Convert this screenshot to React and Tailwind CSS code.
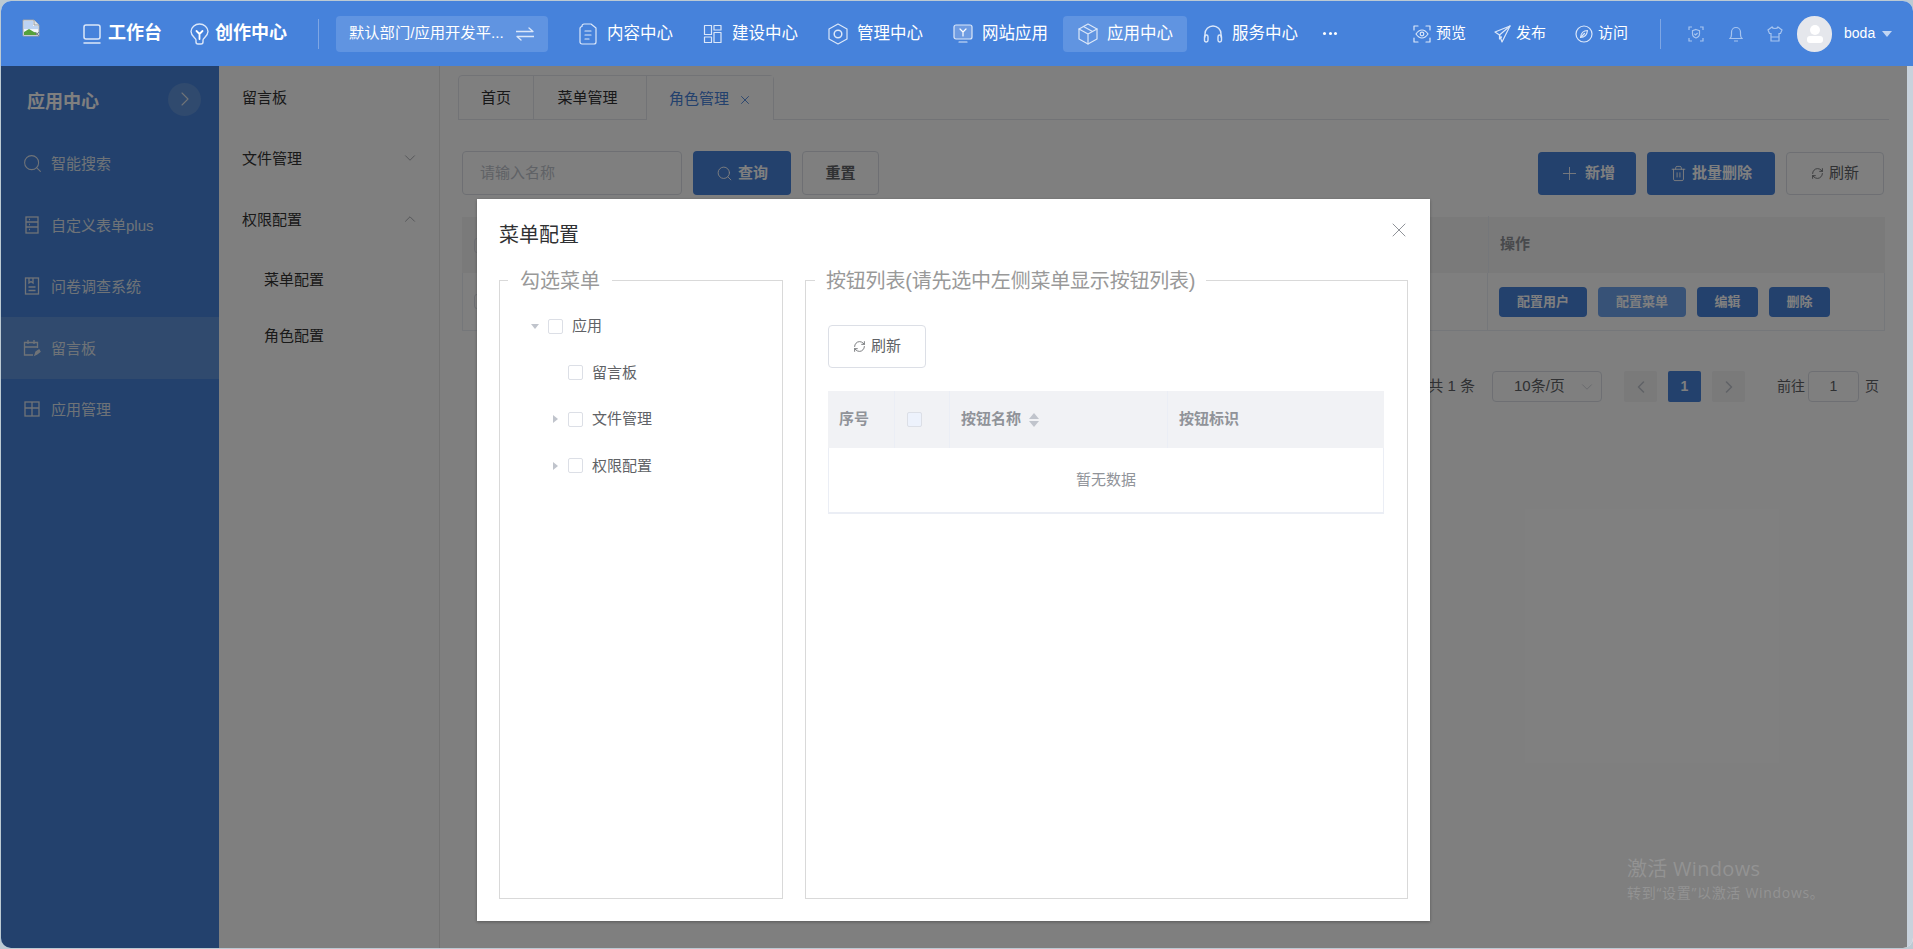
import React from 'react';
import { Search, Plus, Trash2, X, ChevronDown, ChevronUp, ChevronRight, ChevronLeft, RefreshCw } from 'lucide-react';

const ic = { fill: 'none', stroke: '#dbe7f9', strokeWidth: 1.2, strokeLinecap: 'round', strokeLinejoin: 'round' };

// icones du header, dessinees a la main
const BrokenImage = () => (
  <svg width="18" height="18" viewBox="0 0 18 18">
    <path d="M1 1h11l5 5v11H1z" fill="#f2f5fa" stroke="#9aa0a6" />
    <path d="M12 1v5h5" fill="#dfe3e8" stroke="#9aa0a6" />
    <path d="M2 2h9v5h5v3H2z" fill="#bcd3f3" />
    <path d="M2 16v-3l5-3 5 3 4 1v2z" fill="#55a13c" />
    <path d="M13 13l4 4M17 13l-3 3" stroke="#7d8590" />
  </svg>
);
const Laptop = () => (
  <svg width="18" height="22" viewBox="0 0 18 22" {...ic} strokeWidth="1.5">
    <rect x="1" y="2" width="16" height="14" rx="2" />
    <path d="M1 20h16" />
  </svg>
);
const Bulb = () => (
  <svg width="19" height="22" viewBox="0 0 19 22" {...ic} strokeWidth="1.4">
    <path d="M6 17c0-2-5-4-5-8.500C1 4.500 5 1 9.500 1S18 4.500 18 8.500C18 13 13 15 13 17v2a2 2 0 0 1-2 2H8a2 2 0 0 1-2-2z" />
    <path d="M6.500 8l3 3 3-3M9.500 11v5" stroke="#fff" strokeWidth="1.800" />
  </svg>
);
const Doc = () => (
  <svg width="20" height="22" viewBox="0 0 20 22" {...ic}>
    <path d="M4 3.500V3a2 2 0 0 1 2-2h7l5 4v14a2 2 0 0 1-2 2H4a2 2 0 0 1-2-2V5.500a2 2 0 0 1 2-2z" />
    <path d="M7 8h6M7 12h6M7 16h4" />
  </svg>
);
const Blocks = () => (
  <svg width="20" height="20" viewBox="0 0 20 20" {...ic}>
    <rect x="1.500" y="1.500" width="7" height="9" />
    <rect x="1.500" y="13" width="7" height="5.500" />
    <rect x="11" y="1.500" width="7" height="4.500" />
    <rect x="11" y="8.500" width="7" height="10" />
  </svg>
);
const Hex = () => (
  <svg width="20" height="22" viewBox="0 0 20 22" {...ic}>
    <path d="M10 1l9 5v10l-9 5-9-5V6z" />
    <circle cx="10" cy="11" r="3.800" strokeWidth="1.500" />
  </svg>
);
const Monitor = () => (
  <svg width="20" height="20" viewBox="0 0 20 20" {...ic}>
    <rect x="1" y="1" width="18" height="14" rx="2" fill="#6f9ce2" />
    <path d="M7 5l3 3 3-3M10 8v4" stroke="#fff" />
    <path d="M6 18h8" />
  </svg>
);
const Cube = () => (
  <svg width="20" height="22" viewBox="0 0 20 22" {...ic}>
    <path d="M10 1l9 5v10l-9 5-9-5V6z" />
    <path d="M1 6l9 5 9-5M10 11v10M5.500 3.500l9 5" />
  </svg>
);
const Headset = () => (
  <svg width="20" height="20" viewBox="0 0 20 20" {...ic} strokeWidth="1.4">
    <path d="M2 13v-3a8 8 0 0 1 16 0v3" />
    <rect x="1.500" y="11" width="3.500" height="7" rx="1.700" />
    <rect x="15" y="11" width="3.500" height="7" rx="1.700" />
  </svg>
);
const Swap = () => (
  <svg width="18" height="14" viewBox="0 0 18 14" {...ic} strokeWidth="1.300">
    <path d="M0 4.500h17L13 1M18 9.500H1L5 13" />
  </svg>
);
const Preview = () => (
  <svg width="18" height="18" viewBox="0 0 18 18" {...ic}>
    <path d="M1 5V1h4M13 1h4v4M17 13v4h-4M5 17H1v-4" />
    <path d="M3 9c2-3 4-4 6-4s4 1 6 4c-2 3-4 4-6 4s-4-1-6-4z" />
    <circle cx="9" cy="9" r="1.800" />
  </svg>
);
const Send = () => (
  <svg width="17" height="18" viewBox="0 0 17 18" {...ic}>
    <path d="M16 1L1 7l4.500 3L8 17z" />
    <path d="M16 1L5.500 10v4l2-2" />
  </svg>
);
const Compass = () => (
  <svg width="18" height="18" viewBox="0 0 18 18" {...ic}>
    <circle cx="9" cy="9" r="8" />
    <path d="M12.500 5.500C9 5.500 6 8 5.500 12.500 9 12.500 12 10 12.500 5.500zM6 12l3.500-3.500" />
  </svg>
);
const ShieldScan = () => (
  <svg width="16" height="16" viewBox="0 0 16 16" fill="none" stroke="#a6c4ef" strokeWidth="1.200">
    <path d="M1 4V1h3M12 1h3v3M15 12v3h-3M4 15H1v-3" />
    <path d="M8 3.500l3.500 1.200V8c0 2-2 3.500-3.500 4-1.500-.5-3.500-2-3.500-4V4.700zM6.300 7.800L7.600 9l2-2" />
  </svg>
);
const Bell = () => (
  <svg width="14" height="16" viewBox="0 0 14 16" fill="none" stroke="#a6c4ef" strokeWidth="1.200">
    <path d="M1 12.500c1-1 1.500-2 1.500-4V6a4.500 4.500 0 0 1 9 0v2.500c0 2 .5 3 1.500 4zM5 15h4" />
  </svg>
);
const Shirt = () => (
  <svg width="16" height="16" viewBox="0 0 16 16" fill="none" stroke="#a6c4ef" strokeWidth="1.200">
    <path d="M5 1L1 4l1.500 3.500H4V15h8V7.500h1.500L15 4l-4-3c-.5 2-5.500 2-6 0zM4 11h8" />
  </svg>
);

// icones du menu lateral
const sideIc = { fill: 'none', stroke: '#dfe6ef', strokeWidth: 1.3 };
const FormIcon = () => (
  <svg width="16" height="18" viewBox="0 0 16 18" {...sideIc}>
    <rect x="2" y="1" width="12" height="16" />
    <path d="M2 6h12M2 11h12M5 3.500h1M5 8.500h1M5 13.500h1" />
  </svg>
);
const SurveyIcon = () => (
  <svg width="16" height="18" viewBox="0 0 16 18" {...sideIc}>
    <rect x="1.500" y="1" width="13" height="16" />
    <path d="M5 1v5l2-1.500L9 6V1M4.500 10h7M4.500 13.500h7" />
  </svg>
);
const BoardIcon = () => (
  <svg width="18" height="18" viewBox="0 0 18 18" {...sideIc}>
    <path d="M10 16H1.500V3.500h13V9M1.500 8h13M5 1v4M11 1v4" />
    <path d="M12 16l1-3 3-2 1 1.500-3 2.500z" fill="#dfe6ef" />
  </svg>
);
const GridIcon = () => (
  <svg width="16" height="16" viewBox="0 0 16 16" {...sideIc}>
    <rect x="1" y="1" width="14" height="14" />
    <path d="M1 7h14M8 1v14" />
  </svg>
);

const sideItems = [
  { label: '智能搜索', icon: <Search size={21} strokeWidth={1.2} color="#dfe6ef" /> },
  { label: '自定义表单plus', icon: <FormIcon /> },
  { label: '问卷调查系统', icon: <SurveyIcon /> },
  { label: '留言板', icon: <BoardIcon />, active: true },
  { label: '应用管理', icon: <GridIcon /> },
];

const navItems = [
  { label: '内容中心', icon: <Doc /> },
  { label: '建设中心', icon: <Blocks /> },
  { label: '管理中心', icon: <Hex /> },
  { label: '网站应用', icon: <Monitor /> },
  { label: '应用中心', icon: <Cube />, active: true },
  { label: '服务中心', icon: <Headset /> },
];

const TopAction = ({ icon, label, className }) => (
  <div className={`flex items-center gap-[5px] text-[15px] text-white ${className}`}>
    {icon}
    <span>{label}</span>
  </div>
);

const Header = () => (
  <header className="h-[65px] shrink-0 bg-[#4682db] flex items-center pl-[21px] relative z-20">
    <div className="-mt-[11px]"><BrokenImage /></div>
    <div className="flex items-center gap-[7px] ml-[43px] text-[18px] font-bold text-white">
      <Laptop />
      <span>工作台</span>
    </div>
    <div className="flex items-center gap-[6px] ml-[28px] text-[18px] font-bold text-white">
      <Bulb />
      <span>创作中心</span>
    </div>
    <div className="w-px h-[30px] bg-[#7ea6e4] ml-[31px]"></div>
    <div className="w-[212px] h-[36px] ml-[17px] rounded-[4px] bg-[#6094e1] flex items-center pl-[13px] text-[15.300px] text-white">
      <span className="w-[167px] whitespace-nowrap">默认部门/应用开发平...</span>
      <Swap />
    </div>
    <div className="flex gap-px ml-[15px]">
      {navItems.map(item => (
        <div
          key={item.label}
          className={`w-[124px] h-[36px] pl-[15px] rounded-[4px] flex items-center gap-[9px] text-[16.500px] text-white ${item.active ? 'bg-[#6094e1]' : ''}`}
        >
          {item.icon}
          <span>{item.label}</span>
        </div>
      ))}
    </div>
    <div className="flex gap-[2.500px] ml-[11px] w-[15px]">
      <span className="w-[3px] h-[3px] rounded-full bg-white"></span>
      <span className="w-[3px] h-[3px] rounded-full bg-white"></span>
      <span className="w-[3px] h-[3px] rounded-full bg-white"></span>
    </div>
    <TopAction icon={<Preview />} label="预览" className="ml-[75px]" />
    <TopAction icon={<Send />} label="发布" className="ml-[28px]" />
    <TopAction icon={<Compass />} label="访问" className="ml-[29px]" />
    <div className="w-px h-[30px] bg-[#7ea6e4] ml-[32px]"></div>
    <div className="ml-[27px]"><ShieldScan /></div>
    <div className="ml-[25px]"><Bell /></div>
    <div className="ml-[24px]"><Shirt /></div>
    <div className="w-[35px] h-[36px] ml-[14px] rounded-full bg-[#e5e7ec] flex flex-col items-center justify-center">
      <span className="w-[10px] h-[10px] rounded-full bg-white"></span>
      <span className="w-[16px] h-[7px] mt-[1px] rounded-[3px] bg-white"></span>
    </div>
    <span className="ml-[12px] text-[14px] text-white">boda</span>
    <span className="ml-[7px] w-0 h-0 border-x-[5.500px] border-x-transparent border-t-[6px] border-t-[#c2d6f3]"></span>
  </header>
);

const Sidebar = () => (
  <aside className="w-[218px] shrink-0 bg-[#4682db]">
    <div className="h-[66.500px] pl-[26px] pr-[18px] flex items-center justify-between">
      <span className="text-[18px] font-bold text-white mt-[6px]">应用中心</span>
      <span className="w-[33px] h-[33px] rounded-full bg-[#6094dc] flex items-center justify-center">
        <ChevronRight size={24} strokeWidth={1.100} color="#dfe6ef" />
      </span>
    </div>
    {sideItems.map(item => (
      <div key={item.label} className={`h-[61.500px] flex items-center text-[15px] text-[#dfe6ef] ${item.active ? 'bg-[#6094dc]' : ''}`}>
        <span className="w-[50px] flex justify-center pl-[12px]">{item.icon}</span>
        <span className="mt-[2px]">{item.label}</span>
      </div>
    ))}
  </aside>
);

const SubRow = ({ label, open }) => (
  <div className="h-[61px] pl-[23px] pr-[20px] flex items-center justify-between text-[15px] text-[#333]">
    <span>{label}</span>
    {open === true && <ChevronUp size={18} strokeWidth={1} color="#909399" className="-mt-[4px]" />}
    {open === false && <ChevronDown size={18} strokeWidth={1} color="#909399" className="-mt-[4px]" />}
  </div>
);

const SubMenu = () => (
  <aside className="w-[221px] shrink-0 bg-white border-r border-[#e6e6e6] pt-[2px]">
    <SubRow label="留言板" />
    <SubRow label="文件管理" open={false} />
    <SubRow label="权限配置" open={true} />
    <div className="h-[55px] pl-[45px] flex items-center text-[15px] text-[#333] mt-[2px]">菜单配置</div>
    <div className="h-[55px] pl-[45px] flex items-center text-[15px] text-[#333] mt-[1px]">角色配置</div>
  </aside>
);

const PageBtn = ({ primary, className, children }) => (
  <div className={`h-[43px] rounded-[4px] flex items-center justify-center gap-[5px] text-[15px] ${primary ? 'bg-[#4682db] text-white font-bold' : 'border border-[#dcdfe6] text-[#606266]'} ${className}`}>
    {children}
  </div>
);

const RowBtn = ({ light, className, children }) => (
  <div className={`h-[30px] rounded-[4px] flex items-center justify-center text-[13px] font-bold text-white ${light ? 'bg-[#6ea4ee]' : 'bg-[#4682db]'} ${className}`}>
    {children}
  </div>
);

const Page = () => (
  <main className="flex-1 min-w-0 bg-white pl-[18px] pt-[9px]">
    {/* onglets */}
    <div className="h-[45px] mr-[18px] border-b border-[#e4e7ed] flex">
      <div className="h-[45px] flex border border-[#e4e7ed] rounded-t-[4px] text-[15px] text-[#303133]">
        <div className="w-[74px] flex items-center justify-center pt-[2px]">首页</div>
        <div className="w-[113px] flex items-center justify-center border-l border-[#e4e7ed] pt-[2px] pr-[5px]">菜单管理</div>
        <div className="w-[127px] h-[44px] pl-[22px] pt-[2px] flex items-center border-l border-[#e4e7ed] bg-white text-[#4682db]">
          <span>角色管理</span>
          <X size={14} strokeWidth={1.500} className="ml-[9px] mt-[2px]" />
        </div>
      </div>
    </div>
    {/* filtres */}
    <div className="mt-[31px] ml-[4px] mr-[23px] flex items-center">
      <div className="w-[220px] h-[44px] border border-[#dcdfe6] rounded-[4px] pl-[17px] flex items-center text-[15px] text-[#c0c4cc]">请输入名称</div>
      <PageBtn primary className="w-[98px] h-[44px] ml-[11px]"><Search size={17} strokeWidth={1.300} />查询</PageBtn>
      <PageBtn className="w-[77px] h-[44px] ml-[11px] font-bold">重置</PageBtn>
      <div className="flex-1"></div>
      <PageBtn primary className="w-[98px]"><Plus size={21} strokeWidth={1} />新增</PageBtn>
      <PageBtn primary className="w-[128px] ml-[11px]"><Trash2 size={17} strokeWidth={1.300} />批量删除</PageBtn>
      <PageBtn className="w-[98px] ml-[11px]"><RefreshCw size={13} strokeWidth={1.500} />刷新</PageBtn>
    </div>
    {/* tableau */}
    <div className="mt-[22px] ml-[4px] mr-[22px] text-[15px]">
      <div className="h-[56px] bg-[#f5f5f5] flex font-bold text-[#909399]">
        <div className="flex-1 pl-[12px] flex items-center">
          <span className="w-[15px] h-[15px] rounded-[3px] border border-[#dcdfe6]"></span>
        </div>
        <div className="w-[397px] pl-[11px] flex items-center border-l border-[#ebeef5] -mt-px">操作</div>
      </div>
      <div className="h-[58px] flex border-b border-x border-[#ebeef5]">
        <div className="flex-1 pl-[11px] flex items-center">
          <span className="w-[15px] h-[15px] rounded-[3px] border border-[#dcdfe6]"></span>
        </div>
        <div className="w-[397px] pl-[11px] flex items-center gap-[11px] border-l border-[#ebeef5]">
          <RowBtn className="w-[88px]">配置用户</RowBtn>
          <RowBtn light className="w-[88px]">配置菜单</RowBtn>
          <RowBtn className="w-[61px]">编辑</RowBtn>
          <RowBtn className="w-[61px]">删除</RowBtn>
        </div>
      </div>
    </div>
    {/* pagination */}
    <div className="mt-[40px] mr-[28px] h-[31px] flex justify-end items-center text-[14px] text-[#606266]">
      <span className="text-[15px]">共 1 条</span>
      <div className="w-[110px] h-[31px] ml-[17px] border border-[#dcdfe6] rounded-[4px] flex items-center justify-between pl-[21px] pr-[5px] text-[15px]">
        <span>10条/页</span>
        <ChevronDown size={18} strokeWidth={1} color="#c0c4cc" />
      </div>
      <div className="w-[33px] h-[31px] ml-[22px] rounded-[2px] bg-[#f4f4f5] flex items-center justify-center">
        <ChevronLeft size={20} strokeWidth={1.800} color="#c0c4cc" />
      </div>
      <div className="w-[33px] h-[31px] ml-[11px] rounded-[2px] bg-[#4682db] text-white font-bold flex items-center justify-center">1</div>
      <div className="w-[33px] h-[31px] ml-[11px] rounded-[2px] bg-[#f4f4f5] flex items-center justify-center">
        <ChevronRight size={20} strokeWidth={1.800} color="#c0c4cc" />
      </div>
      <span className="ml-[32px]">前往</span>
      <div className="w-[51px] h-[31px] ml-[3px] border border-[#dcdfe6] rounded-[4px] flex items-center justify-center">1</div>
      <span className="ml-[6px]">页</span>
    </div>
  </main>
);

const Box = ({ className }) => (
  <span className={`block w-[15px] h-[15px] rounded-[2px] border border-[#dcdfe6] bg-white ${className || ''}`}></span>
);

const treeRows = [
  { label: '应用', depth: 0, arrow: 'down' },
  { label: '留言板', depth: 1 },
  { label: '文件管理', depth: 1, arrow: 'right' },
  { label: '权限配置', depth: 1, arrow: 'right' },
];

const TreeRow = ({ row }) => (
  <div className={`h-[46.500px] flex items-center text-[15px] text-[#606266] ${row.depth === 1 ? 'pl-[48px]' : 'pl-[28px]'}`}>
    <span className="w-[14px] mr-[6px] flex justify-center">
      {row.arrow === 'down' && <span className="w-0 h-0 border-x-[4px] border-x-transparent border-t-[5px] border-t-[#c0c4cc]"></span>}
      {row.arrow === 'right' && <span className="w-0 h-0 border-y-[4px] border-y-transparent border-l-[5px] border-l-[#c0c4cc]"></span>}
    </span>
    <Box />
    <span className="ml-[9px]">{row.label}</span>
  </div>
);

const MenuConfigDialog = () => (
  <div className="w-[953px] h-[722px] mt-[133px] mr-px bg-white shadow-[0_1px_3px_rgba(0,0,0,0.3)] relative">
    <div className="h-[66px] pl-[22px] pt-[23px] text-[20px] leading-[26px] text-[#303133]">菜单配置</div>
    <X size={24} strokeWidth={1} color="#909399" className="absolute top-[19px] right-[19px]" />
    <div className="flex gap-[22px] pl-[22px]">
      <fieldset className="w-[284px] h-[634px] border border-[#d9d9d9]">
        <legend className="ml-[8px] px-[12px] pt-[2px] text-[20px] leading-[28px] text-[#999]">勾选菜单</legend>
        <div className="pt-[8px]">
          {treeRows.map(row => <TreeRow key={row.label} row={row} />)}
        </div>
      </fieldset>
      <fieldset className="w-[603px] h-[634px] border border-[#d9d9d9]">
        <legend className="ml-[9px] px-[11px] pt-[2px] text-[20px] leading-[28px] text-[#999] tracking-[-0.2px]">按钮列表(请先选中左侧菜单显示按钮列表)</legend>
        <div className="pl-[22px] pt-[30px]">
          <div className="w-[98px] h-[43px] border border-[#dcdfe6] rounded-[4px] flex items-center justify-center gap-[5px] text-[15px] text-[#606266]">
            <RefreshCw size={13} strokeWidth={1.500} />
            刷新
          </div>
          <div className="w-[556px] mt-[23px] text-[15px]">
            <div className="h-[57px] bg-[#f1f2f5] flex font-bold text-[#909399]">
              <div className="w-[67px] pl-[11px] flex items-center border-r border-[#ebeef5]">序号</div>
              <div className="w-[55px] pl-[12px] flex items-center border-r border-[#ebeef5]">
                <span className="block w-[15px] h-[15px] rounded-[2px] border border-[#dcdfe6] bg-[#edf2fc]"></span>
              </div>
              <div className="w-[218px] pl-[11px] flex items-center gap-[8px] border-r border-[#ebeef5]">
                <span>按钮名称</span>
                <span className="flex flex-col gap-[2px]">
                  <span className="w-0 h-0 border-x-[5px] border-x-transparent border-b-[6px] border-b-[#c0c4cc]"></span>
                  <span className="w-0 h-0 border-x-[5px] border-x-transparent border-t-[6px] border-t-[#c0c4cc]"></span>
                </span>
              </div>
              <div className="flex-1 pl-[11px] flex items-center">按钮标识</div>
            </div>
            <div className="h-[66px] border-x border-b-2 border-[#ebeef5] flex items-center justify-center text-[#909399]">暂无数据</div>
          </div>
        </div>
      </fieldset>
    </div>
  </div>
);

export default function App() {
  return (
    <div className="w-[1913px] h-[949px] bg-[#bccad3] pt-px pl-px pb-px overflow-hidden font-['Liberation_Sans','Noto_Sans_CJK_SC',sans-serif]">
      <div className="h-full bg-white rounded-[10px] overflow-hidden flex flex-col">
        <Header />
        <div className="flex-1 min-h-0 flex">
          <div className="flex-1 min-w-0 flex relative">
            <Sidebar />
            <SubMenu />
            <Page />
            {/* masque + dialogue */}
            <div className="absolute inset-0 bg-black/50 flex justify-center z-10">
              <MenuConfigDialog />
              <div className="absolute left-[1626px] top-[790px] whitespace-nowrap text-[#939393] font-['Open_Sans','Noto_Sans_CJK_SC',sans-serif]">
                <p className="text-[20px] leading-[26px] tracking-[0.3px]">激活 Windows</p>
                <p className="text-[14px] leading-[22px] tracking-[0.7px]">转到“设置”以激活 Windows。</p>
              </div>
            </div>
          </div>
          <div className="w-[6px] bg-[#c8d2dc]"></div>
        </div>
      </div>
    </div>
  );
}
